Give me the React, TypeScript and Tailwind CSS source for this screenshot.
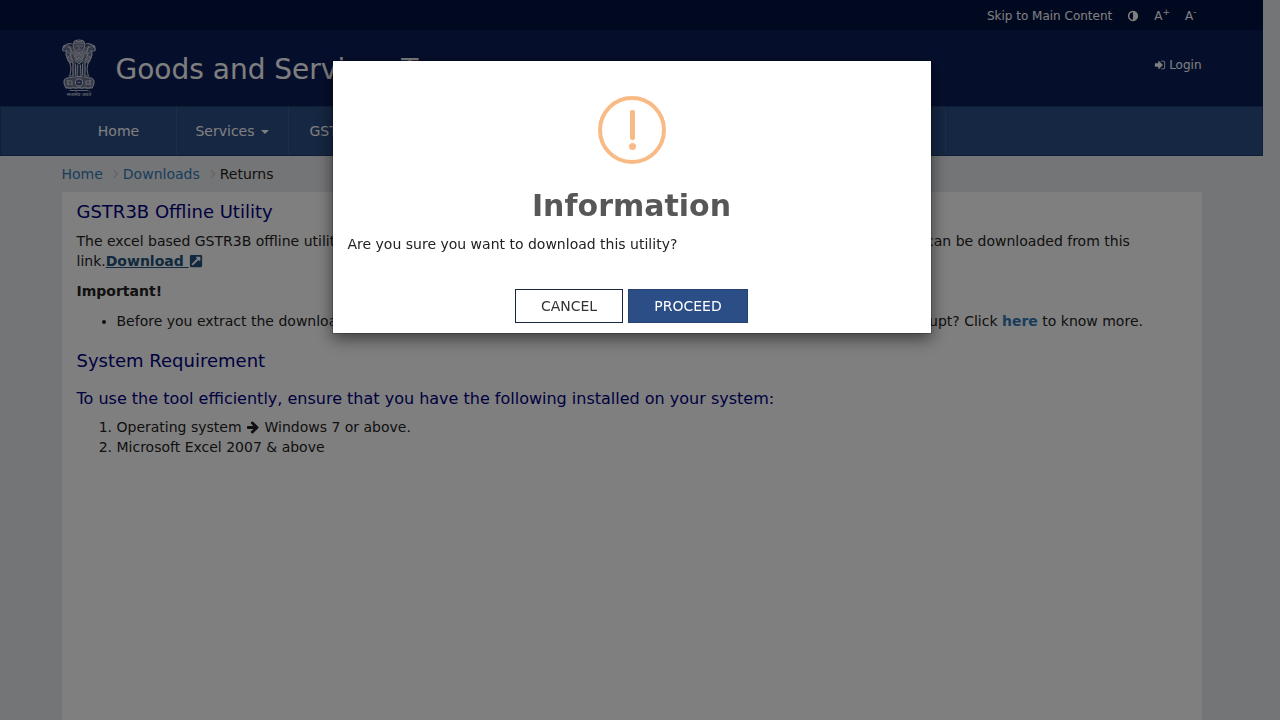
import type { ReactNode } from "react";
import { FaExternalLinkSquareAlt } from "react-icons/fa";

const menuItems = ["GST Law", "Downloads", "Search Taxpayer", "Help and Taxpayer Facilities"];

const Glyph = ({ children }: { children: ReactNode }) => (
  <svg viewBox="0 0 1792 1792" className="inline h-[1em] w-[1em] align-[-2px]" fill="currentColor">
    {children}
  </svg>
);

const ContrastIcon = () => (
  <Glyph>
    <path d="M896 1440V352q-148 0-273 73t-198 198-73 273 73 273 198 198 273 73zM1664 896q0 209-103 385.500t-279.500 279.500-385.500 103-385.500-103-279.500-279.500-103-385.500 103-385.500 279.500-279.500 385.500-103 385.500 103 279.500 279.500 103 385.500z" />
  </Glyph>
);

const ArrowRightIcon = () => (
  <Glyph>
    <path d="M1600 960q0 54-37 91l-651 651q-39 37-91 37-51 0-90-37l-75-75q-38-38-38-91t38-91l293-293H245q-52 0-84.500-37.500T128 1024V896q0-53 32.500-90.500T245 768h704L656 474q-38-36-38-90t38-90l75-75q38-38 90-38 53 0 91 38l651 651q37 35 37 90z" />
  </Glyph>
);

const SignInIcon = () => (
  <Glyph>
    <path d="M1312 896q0 26-19 45l-544 544q-19 19-45 19t-45-19-19-45v-288H192q-26 0-45-19t-19-45V704q0-26 19-45t45-19h448V352q0-26 19-45t45-19 45 19l544 544q19 19 19 45z" />
    <path d="M1664 544v704q0 119-84.500 203.500T1376 1536h-320q-32 0-32-32v-64q0-32 32-32h320q66 0 113-47t47-113V544q0-66-47-113t-113-47h-320q-32 0-32-32v-64q0-32 32-32h320q119 0 203.500 84.500T1664 544z" />
  </Glyph>
);

const Emblem = () => (
  <svg viewBox="0 0 34 58" className="h-[58px] w-[34px]" fill="none" stroke="#c8ccd8" strokeLinecap="round">
    {/* soft fill behind the line work */}
    <g fill="#6d7590" stroke="none">
      <path d="M12 3h10l1 5 5-3 5 4-3 4v6l-4 5H8l-4-5v-6L1 9l5-4 5 3z" />
      <path d="M10 24h4v13h-4zM15 24h4v13h-4zM20 24h4v13h-4z" opacity="0.500" />
      <path d="M5 39h24l3 4-2 6H4l-2-6z" />
    </g>
    {/* centre lion */}
    <path d="M12 3q1-2 5-2t5 2l1 3q-1 5-3 6.500-3 1.500-6 0-2-1.500-3-6.500z" strokeWidth="1.200" />
    <path d="M13 4.500q4-1.500 8 0M13.500 7h2M18.500 7h2M17 6v4M15 10.500q2 1.500 4 0M14 2.500h6" strokeWidth="0.900" />
    <path d="M11 12q1 5 3 8M23 12q-1 5-3 8M14 13v8M16 13.500v9M18 13.500v9M20 13v8M12.500 13l2 4 2.500-3 2.500 3 2-4M12 17l3 4 2-3 2 3 3-4M13 21l4 4 4-4" strokeWidth="0.900" />
    {/* side lions */}
    <path d="M10 5q-4-1-6 1l-3 3q-1 2 1 3h3M4 6q-2 0-3 2M6 8h2M5 12q-2 3 0 6 1 4 3 6M7 8q3 2 2 6t2 8" strokeWidth="1.200" />
    <path d="M24 5q4-1 6 1l3 3q1 2-1 3h-3M30 6q2 0 3 2M28 8h-2M29 12q2 3 0 6-1 4-3 6M27 8q-3 2-2 6t-2 8" strokeWidth="1.200" />
    <path d="M6 13l3 3-3 2 4 3M8 11l3 4M28 13l-3 3 3 2-4 3M26 11l-3 4M7 21l4 3M27 21l-4 3" strokeWidth="0.900" />
    {/* legs */}
    <path d="M8 24l1 6-1 6M11 24v12M13.500 25v11M15.500 26l-.5 11M18.500 26l.5 11M20.500 25v11M23 24v12M26 24l-1 6 1 6M7 37h5M14 37.500h6M22 37h5" strokeWidth="1.100" />
    {/* abacus with the wheel */}
    <path d="M5 39q12-2 24 0 3 1 3 4t-2 6H4q-2-3-2-6t3-4z" strokeWidth="1.200" />
    <circle cx="17" cy="43.500" r="3.600" fill="#0b1e59" strokeWidth="1.200" />
    <path d="M17 40v7M13.500 43.500h7M14.600 41.100l4.800 4.800M19.400 41.100l-4.800 4.800" strokeWidth="0.500" />
    <path d="M5 42h5M5 45h4M6 41v5M10 42v4M24 42h5M25 45h4M28 41v5M24 42v4" strokeWidth="1.100" />
    <path d="M5 48q3 3 6 0 3 3 6 0 3 3 6 0 3 3 6 0M8 51.500h18" strokeWidth="0.900" />
    <text x="17" y="57" textAnchor="middle" fontSize="5" fill="#e6e6e6" stroke="none" fontFamily="Noto Sans, sans-serif">
      सत्यमेव जयते
    </text>
  </svg>
);

const Header = () => (
  <header className="text-white">
    <div className="bg-[#021242]">
      <div className="mx-auto flex h-[30px] max-w-[1140px] items-center justify-end gap-[15px] pt-px pr-[5px] text-xs">
        <a href="#main">Skip to Main Content</a>
        <button type="button" aria-label="Toggle contrast">
          <ContrastIcon />
        </button>
        <button type="button">A<sup>+</sup></button>
        <button type="button">A<sup>-</sup></button>
      </div>
    </div>

    <div className="bg-[#0b1e59]">
      <div className="mx-auto flex h-[76px] max-w-[1140px] items-center">
        <a href="#home" aria-label="Emblem">
          <Emblem />
        </a>
        <a href="#home" className="ml-5 pt-1 text-[28px] leading-10">Goods and Services Tax</a>
        <a href="#login" className="mb-[6px] ml-auto flex items-center gap-[3px] text-xs">
          <SignInIcon /> Login
        </a>
      </div>
    </div>

    <nav className="border border-[#203c6b] bg-[#2c4e86] text-sm">
      <div className="mx-auto flex h-12 max-w-[1140px]">
        <div className="flex w-[884px] overflow-hidden border-r border-[#3a5b8f] whitespace-nowrap">
          <a href="#home" className="flex w-[115px] shrink-0 items-center justify-center border-r border-[#3a5b8f]">
            Home
          </a>
          <a href="#services" className="flex w-28 shrink-0 items-center justify-center gap-[6px] border-r border-[#3a5b8f]">
            Services
            <span className="mt-[2px] border-x-4 border-t-4 border-x-transparent border-t-white"></span>
          </a>
          {menuItems.map((item) => (
            <a key={item} href="#menu" className="flex items-center border-r border-[#3a5b8f] px-[21px] last:border-r-0">
              {item}
            </a>
          ))}
        </div>
      </div>
    </nav>
  </header>
);

const Separator = () => (
  <span className="mr-[6px] ml-2 h-[6px] w-[6px] rotate-45 border-t border-r border-[#c4c4c4]"></span>
);

const Breadcrumb = () => (
  <div className="flex h-9 items-center">
    <a href="#home" className="text-[#337ab7]">Home</a>
    <Separator />
    <a href="#downloads" className="text-[#337ab7]">Downloads</a>
    <Separator />
    <span>Returns</span>
  </div>
);

const Content = () => (
  <section className="min-h-[600px] bg-white px-[15px] pt-[10px]">
    <h4 className="text-lg leading-5 text-[#000080]">GSTR3B Offline Utility</h4>
    <p className="mt-[9px]">
      The excel based GSTR3B offline utility can be used for preparing the return offline. The tool along with the user manuals can be downloaded from this
      link.
      <a href="#download" className="font-bold text-[#23527c] underline">
        Download <FaExternalLinkSquareAlt className="inline align-[-2px]" />
      </a>
    </p>
    <p className="mt-[10px] font-bold">Important!</p>
    <ul className="mt-[10px] list-disc pl-10">
      <li>
        Before you extract the downloaded zip files, please do confirm whether the zip file you have downloaded is not corrupt? Click{" "}
        <a href="#here" className="font-bold text-[#337ab7]">here</a> to know more.
      </li>
    </ul>
    <h4 className="mt-5 text-lg leading-5 text-[#000080]">System Requirement</h4>
    <h5 className="mt-[18px] text-base leading-5 text-[#000080]">
      To use the tool efficiently, ensure that you have the following installed on your system:
    </h5>
    <ol className="mt-2 list-decimal pl-10">
      <li>
        Operating system <ArrowRightIcon /> Windows 7 or above.
      </li>
      <li>Microsoft Excel 2007 &amp; above</li>
    </ol>
  </section>
);

const ConfirmModal = () => (
  <div className="fixed inset-0 flex items-start justify-center bg-black/50 pt-[60px] pr-[17px]">
    <div
      role="dialog"
      aria-modal="true"
      aria-labelledby="modal-title"
      className="w-full max-w-[600px] border border-black/20 bg-white bg-clip-padding px-[15px] pt-[35px] pb-[10px] shadow-[0_5px_15px_rgba(0,0,0,0.5)]"
    >
      <svg viewBox="0 0 68 68" className="mx-auto h-[68px] w-[68px]">
        <circle cx="34" cy="34" r="32" fill="none" stroke="#f8bb86" strokeWidth="4" />
        <rect x="32" y="14" width="5" height="30" rx="2" fill="#f8bb86" />
        <circle cx="34.500" cy="50.500" r="3.500" fill="#f8bb86" />
      </svg>
      <h2 id="modal-title" className="mt-[22px] text-center text-[30px] leading-10 font-bold text-[#575757]">
        Information
      </h2>
      <p className="mt-2">Are you sure you want to download this utility?</p>
      <div className="mt-[35px] flex justify-center gap-[5px]">
        <button type="button" className="h-[34px] w-[108px] border border-[#17263f] bg-white text-[#333]">
          CANCEL
        </button>
        <button type="button" className="h-[34px] w-[120px] border border-[#254272] bg-[#2c4e86] text-white">
          PROCEED
        </button>
      </div>
    </div>
  </div>
);

const App = () => (
  <div className="h-screen overflow-hidden bg-[#e9ebee] pr-[17px] font-[Verdana,'DejaVu_Sans',sans-serif] text-sm leading-5 text-[#222]">
    <Header />
    <main id="main" className="mx-auto max-w-[1140px]">
      <Breadcrumb />
      <Content />
    </main>
    <ConfirmModal />
  </div>
);

export default App;
